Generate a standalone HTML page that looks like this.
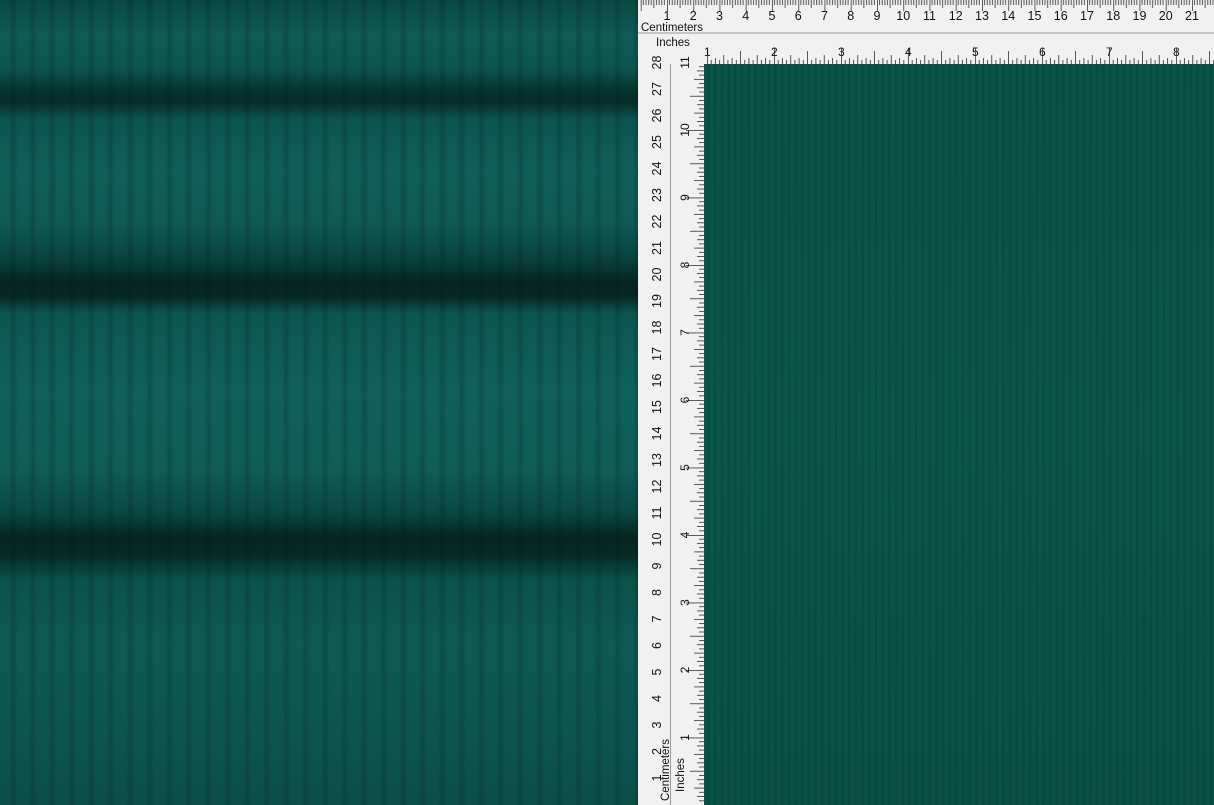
<!DOCTYPE html>
<html><head><meta charset="utf-8"><style>
html,body{margin:0;padding:0;width:1214px;height:805px;overflow:hidden;background:#fff}
#left{position:absolute;left:0;top:0;width:638px;height:805px;
background:
repeating-linear-gradient(90deg,rgba(0,0,0,0) 0px,rgba(0,0,0,0) 9px,rgba(0,20,18,.2) 13px,rgba(0,0,0,0) 18px,rgba(0,0,0,0) 19.5px),
linear-gradient(180deg,#0b4843 0px,#0e5c55 35px,#0d5550 68px,#083430 90px,#072d2a 102px,#0c5550 120px,#0f5f58 170px,#0e5a53 225px,#0a433f 258px,#052420 283px,#062826 296px,#0d5651 314px,#0f615a 390px,#0f5d56 470px,#0b4844 512px,#06241f 538px,#072a26 555px,#0c524c 580px,#0e5a53 640px,#0d5650 730px,#0c4e48 805px);}
#right{position:absolute;left:704px;top:64px;width:510px;height:741px;
background:
repeating-linear-gradient(90deg,rgba(0,0,0,0) 0px,rgba(0,0,0,0) 3px,rgba(0,15,12,.18) 4.5px,rgba(0,0,0,0) 6px,rgba(0,0,0,0) 6.7px),
linear-gradient(180deg,#0b5247 0%,#0b5549 50%,#0a5045 100%);}
svg{position:absolute;left:0;top:0}
text{font-family:"Liberation Sans",Arial,sans-serif;fill:#111}
</style></head><body>
<div id="left"></div>
<div id="right"></div>
<svg width="1214" height="805" viewBox="0 0 1214 805">
<defs>
<pattern id="cmT" patternUnits="userSpaceOnUse" x="640.75" y="0" width="26.25" height="40">
<g stroke="#444" stroke-width="0.9">
<line x1="0.4" y1="0" x2="0.4" y2="11"/><line x1="2.6" y1="0" x2="2.6" y2="5"/><line x1="5.25" y1="0" x2="5.25" y2="5"/><line x1="7.9" y1="0" x2="7.9" y2="5"/><line x1="10.5" y1="0" x2="10.5" y2="5"/><line x1="13.1" y1="0" x2="13.1" y2="8"/><line x1="15.75" y1="0" x2="15.75" y2="5"/><line x1="18.4" y1="0" x2="18.4" y2="5"/><line x1="21" y1="0" x2="21" y2="5"/><line x1="23.6" y1="0" x2="23.6" y2="5"/>
</g></pattern>
<pattern id="inT" patternUnits="userSpaceOnUse" x="640" y="0" width="67" height="64">
<g stroke="#444" stroke-width="0.9">
<line x1="0.4" y1="48" x2="0.4" y2="64"/>
<line x1="4.2" y1="60" x2="4.2" y2="64"/><line x1="8.4" y1="58" x2="8.4" y2="64"/><line x1="12.6" y1="60" x2="12.6" y2="64"/><line x1="16.75" y1="55" x2="16.75" y2="64"/><line x1="20.9" y1="60" x2="20.9" y2="64"/><line x1="25.1" y1="58" x2="25.1" y2="64"/><line x1="29.3" y1="60" x2="29.3" y2="64"/><line x1="33.5" y1="51" x2="33.5" y2="64"/><line x1="37.7" y1="60" x2="37.7" y2="64"/><line x1="41.9" y1="58" x2="41.9" y2="64"/><line x1="46.1" y1="60" x2="46.1" y2="64"/><line x1="50.25" y1="55" x2="50.25" y2="64"/><line x1="54.4" y1="60" x2="54.4" y2="64"/><line x1="58.6" y1="58" x2="58.6" y2="64"/><line x1="62.8" y1="60" x2="62.8" y2="64"/>
</g></pattern>
<pattern id="cmL" patternUnits="userSpaceOnUse" x="0" y="804.5" width="60" height="26.5">
<g stroke="#444" stroke-width="0.9">
<line y1="0.4" x1="638" y2="0.4" x2="650"/><line y1="2.65" x1="638" y2="2.65" x2="644"/><line y1="5.3" x1="638" y2="5.3" x2="644"/><line y1="7.95" x1="638" y2="7.95" x2="644"/><line y1="10.6" x1="638" y2="10.6" x2="644"/><line y1="13.25" x1="638" y2="13.25" x2="647"/><line y1="15.9" x1="638" y2="15.9" x2="644"/><line y1="18.55" x1="638" y2="18.55" x2="644"/><line y1="21.2" x1="638" y2="21.2" x2="644"/><line y1="23.85" x1="638" y2="23.85" x2="644"/>
</g></pattern>
<pattern id="inL" patternUnits="userSpaceOnUse" x="0" y="805" width="710" height="67.5">
<g stroke="#444" stroke-width="0.9">
<line y1="0.4" x1="686" y2="0.4" x2="704"/>
<line y1="4.2" x1="699" y2="4.2" x2="704"/><line y1="8.4" x1="697" y2="8.4" x2="704"/><line y1="12.6" x1="699" y2="12.6" x2="704"/><line y1="16.9" x1="694" y2="16.9" x2="704"/><line y1="21.1" x1="699" y2="21.1" x2="704"/><line y1="25.3" x1="697" y2="25.3" x2="704"/><line y1="29.5" x1="699" y2="29.5" x2="704"/><line y1="33.75" x1="690" y2="33.75" x2="704"/><line y1="38" x1="699" y2="38" x2="704"/><line y1="42.2" x1="697" y2="42.2" x2="704"/><line y1="46.4" x1="699" y2="46.4" x2="704"/><line y1="50.6" x1="694" y2="50.6" x2="704"/><line y1="54.8" x1="699" y2="54.8" x2="704"/><line y1="59" x1="697" y2="59" x2="704"/><line y1="63.3" x1="699" y2="63.3" x2="704"/>
</g></pattern>
</defs>
<rect x="638" y="0" width="576" height="64" fill="#f1f1f1"/>
<rect x="638" y="0" width="66" height="805" fill="#f1f1f1"/>
<rect x="640" y="0" width="574" height="32" fill="url(#cmT)"/>
<rect x="704" y="33" width="510" height="31" fill="url(#inT)"/>
<rect x="638" y="64" width="32" height="741" fill="url(#cmL)"/>
<rect x="671" y="64" width="33" height="741" fill="url(#inL)"/>
<line x1="638" y1="33" x2="1214" y2="33" stroke="#999" stroke-width="1"/>
<line x1="670.5" y1="64" x2="670.5" y2="805" stroke="#999" stroke-width="1"/>
<g font-size="12.5" text-anchor="middle">
<text x="667" y="20">1</text><text x="693.25" y="20">2</text><text x="719.5" y="20">3</text><text x="745.75" y="20">4</text><text x="772" y="20">5</text><text x="798.25" y="20">6</text><text x="824.5" y="20">7</text><text x="850.75" y="20">8</text><text x="877" y="20">9</text><text x="903.25" y="20">10</text><text x="929.5" y="20">11</text><text x="955.75" y="20">12</text><text x="982" y="20">13</text><text x="1008.25" y="20">14</text><text x="1034.5" y="20">15</text><text x="1060.75" y="20">16</text><text x="1087" y="20">17</text><text x="1113.25" y="20">18</text><text x="1139.5" y="20">19</text><text x="1165.75" y="20">20</text><text x="1192" y="20">21</text>
</g>
<text x="641" y="31" font-size="11.5">Centimeters</text>
<text x="656" y="46" font-size="11.5">Inches</text>
<g font-size="12">
<text x="704" y="56">1</text><text x="771" y="56">2</text><text x="838" y="56">3</text><text x="905" y="56">4</text><text x="972" y="56">5</text><text x="1039" y="56">6</text><text x="1106" y="56">7</text><text x="1173" y="56">8</text>
</g>
<g font-size="12.5" text-anchor="middle">
<text x="661" y="778" transform="rotate(-90 661 778)">1</text>
<text x="661" y="751.5" transform="rotate(-90 661 751.5)">2</text>
<text x="661" y="725" transform="rotate(-90 661 725)">3</text>
<text x="661" y="698.5" transform="rotate(-90 661 698.5)">4</text>
<text x="661" y="672" transform="rotate(-90 661 672)">5</text>
<text x="661" y="645.5" transform="rotate(-90 661 645.5)">6</text>
<text x="661" y="619" transform="rotate(-90 661 619)">7</text>
<text x="661" y="592.5" transform="rotate(-90 661 592.5)">8</text>
<text x="661" y="566" transform="rotate(-90 661 566)">9</text>
<text x="661" y="539.5" transform="rotate(-90 661 539.5)">10</text>
<text x="661" y="513" transform="rotate(-90 661 513)">11</text>
<text x="661" y="486.5" transform="rotate(-90 661 486.5)">12</text>
<text x="661" y="460" transform="rotate(-90 661 460)">13</text>
<text x="661" y="433.5" transform="rotate(-90 661 433.5)">14</text>
<text x="661" y="407" transform="rotate(-90 661 407)">15</text>
<text x="661" y="380.5" transform="rotate(-90 661 380.5)">16</text>
<text x="661" y="354" transform="rotate(-90 661 354)">17</text>
<text x="661" y="327.5" transform="rotate(-90 661 327.5)">18</text>
<text x="661" y="301" transform="rotate(-90 661 301)">19</text>
<text x="661" y="274.5" transform="rotate(-90 661 274.5)">20</text>
<text x="661" y="248" transform="rotate(-90 661 248)">21</text>
<text x="661" y="221.5" transform="rotate(-90 661 221.5)">22</text>
<text x="661" y="195" transform="rotate(-90 661 195)">23</text>
<text x="661" y="168.5" transform="rotate(-90 661 168.5)">24</text>
<text x="661" y="142" transform="rotate(-90 661 142)">25</text>
<text x="661" y="115.5" transform="rotate(-90 661 115.5)">26</text>
<text x="661" y="89" transform="rotate(-90 661 89)">27</text>
<text x="661" y="62.5" transform="rotate(-90 661 62.5)">28</text>
</g>
<g font-size="12" text-anchor="middle">
<text x="689" y="737.5" transform="rotate(-90 689 737.5)">1</text>
<text x="689" y="670" transform="rotate(-90 689 670)">2</text>
<text x="689" y="602.5" transform="rotate(-90 689 602.5)">3</text>
<text x="689" y="535" transform="rotate(-90 689 535)">4</text>
<text x="689" y="467.5" transform="rotate(-90 689 467.5)">5</text>
<text x="689" y="400" transform="rotate(-90 689 400)">6</text>
<text x="689" y="332.5" transform="rotate(-90 689 332.5)">7</text>
<text x="689" y="265" transform="rotate(-90 689 265)">8</text>
<text x="689" y="197.5" transform="rotate(-90 689 197.5)">9</text>
<text x="689" y="130" transform="rotate(-90 689 130)">10</text>
<text x="689" y="62.5" transform="rotate(-90 689 62.5)">11</text>
</g>
<text x="669" y="770" font-size="11.5" text-anchor="middle" transform="rotate(-90 669 770)">Centimeters</text>
<text x="684" y="775" font-size="11.5" text-anchor="middle" transform="rotate(-90 684 775)">Inches</text>
</svg>
</body></html>
